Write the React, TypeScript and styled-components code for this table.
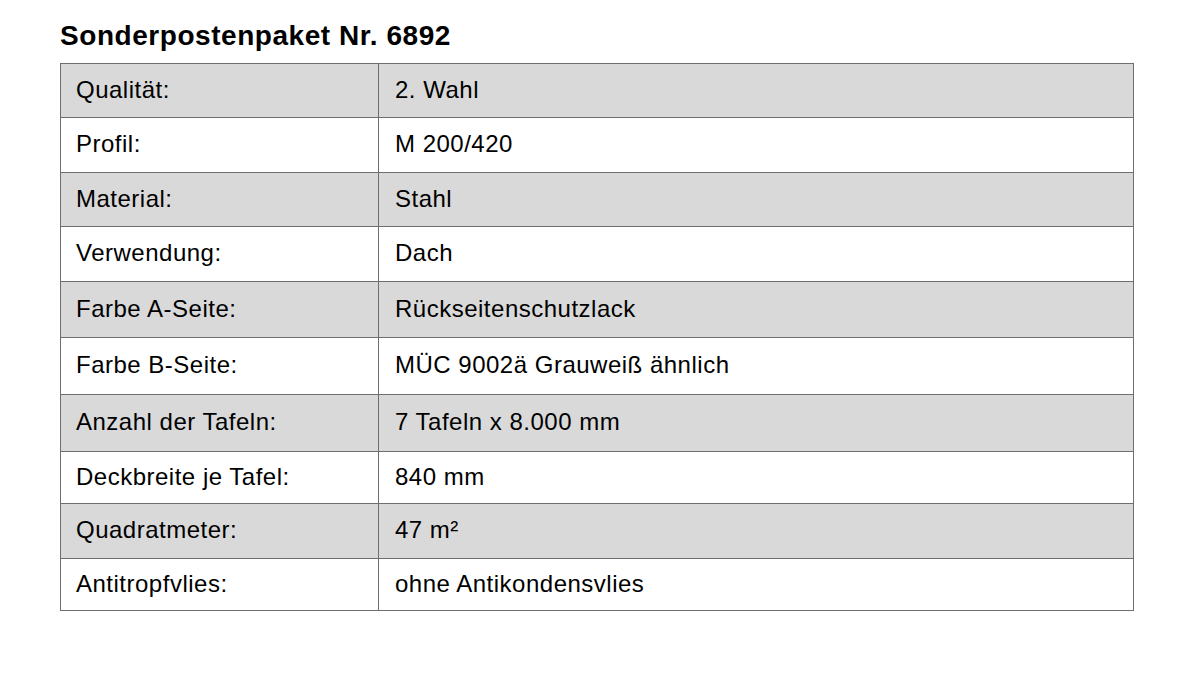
import React from "react";
import styled, { createGlobalStyle } from "styled-components";

const GlobalStyle = createGlobalStyle`
  html, body { margin: 0; padding: 0; background: #ffffff; }
  body { font-family: "Liberation Sans", Arial, sans-serif; color: #000; }
`;

const Page = styled.div`
  padding: 20px 0 0 60px;
`;

const Title = styled.h1`
  margin: 0 0 11px 0;
  font-size: 28px;
  line-height: 32px;
  font-weight: 700;
  letter-spacing: 0.55px;
`;

const Table = styled.div`
  width: 1074px;
  box-sizing: border-box;
  border: 1px solid #6e6e6e;
  border-bottom: none;
  display: flex;
  flex-direction: column;
`;

const Row = styled.div<{ $shaded: boolean; $h: number }>`
  display: grid;
  grid-template-columns: 318px 1fr;
  box-sizing: border-box;
  height: ${(p) => p.$h}px;
  border-bottom: 1px solid #6e6e6e;
  background: ${(p) => (p.$shaded ? "#d9d9d9" : "#ffffff")};
`;

const Cell = styled.div<{ $first?: boolean }>`
  display: flex;
  align-items: center;
  padding-left: ${(p) => (p.$first ? 15 : 16)}px;
  padding-bottom: 2px;
  border-right: ${(p) => (p.$first ? "1px solid #6e6e6e" : "none")};
  font-size: 24px;
  letter-spacing: 0.5px;
  white-space: nowrap;
`;

const rows: [string, string, number][] = [
  ["Qualität:", "2. Wahl", 54],
  ["Profil:", "M 200/420", 55],
  ["Material:", "Stahl", 54],
  ["Verwendung:", "Dach", 55],
  ["Farbe A-Seite:", "Rückseitenschutzlack", 56],
  ["Farbe B-Seite:", "MÜC 9002ä Grauweiß ähnlich", 57],
  ["Anzahl der Tafeln:", "7 Tafeln x 8.000 mm", 57],
  ["Deckbreite je Tafel:", "840 mm", 52],
  ["Quadratmeter:", "47 m²", 55],
  ["Antitropfvlies:", "ohne Antikondensvlies", 52],
];

export default function App() {
  return (
    <>
      <GlobalStyle />
      <Page>
        <Title>Sonderpostenpaket Nr. 6892</Title>
        <Table>
          {rows.map(([k, v, h], i) => (
            <Row key={k} $shaded={i % 2 === 0} $h={h}>
              <Cell $first>{k}</Cell>
              <Cell>{v}</Cell>
            </Row>
          ))}
        </Table>
      </Page>
    </>
  );
}
